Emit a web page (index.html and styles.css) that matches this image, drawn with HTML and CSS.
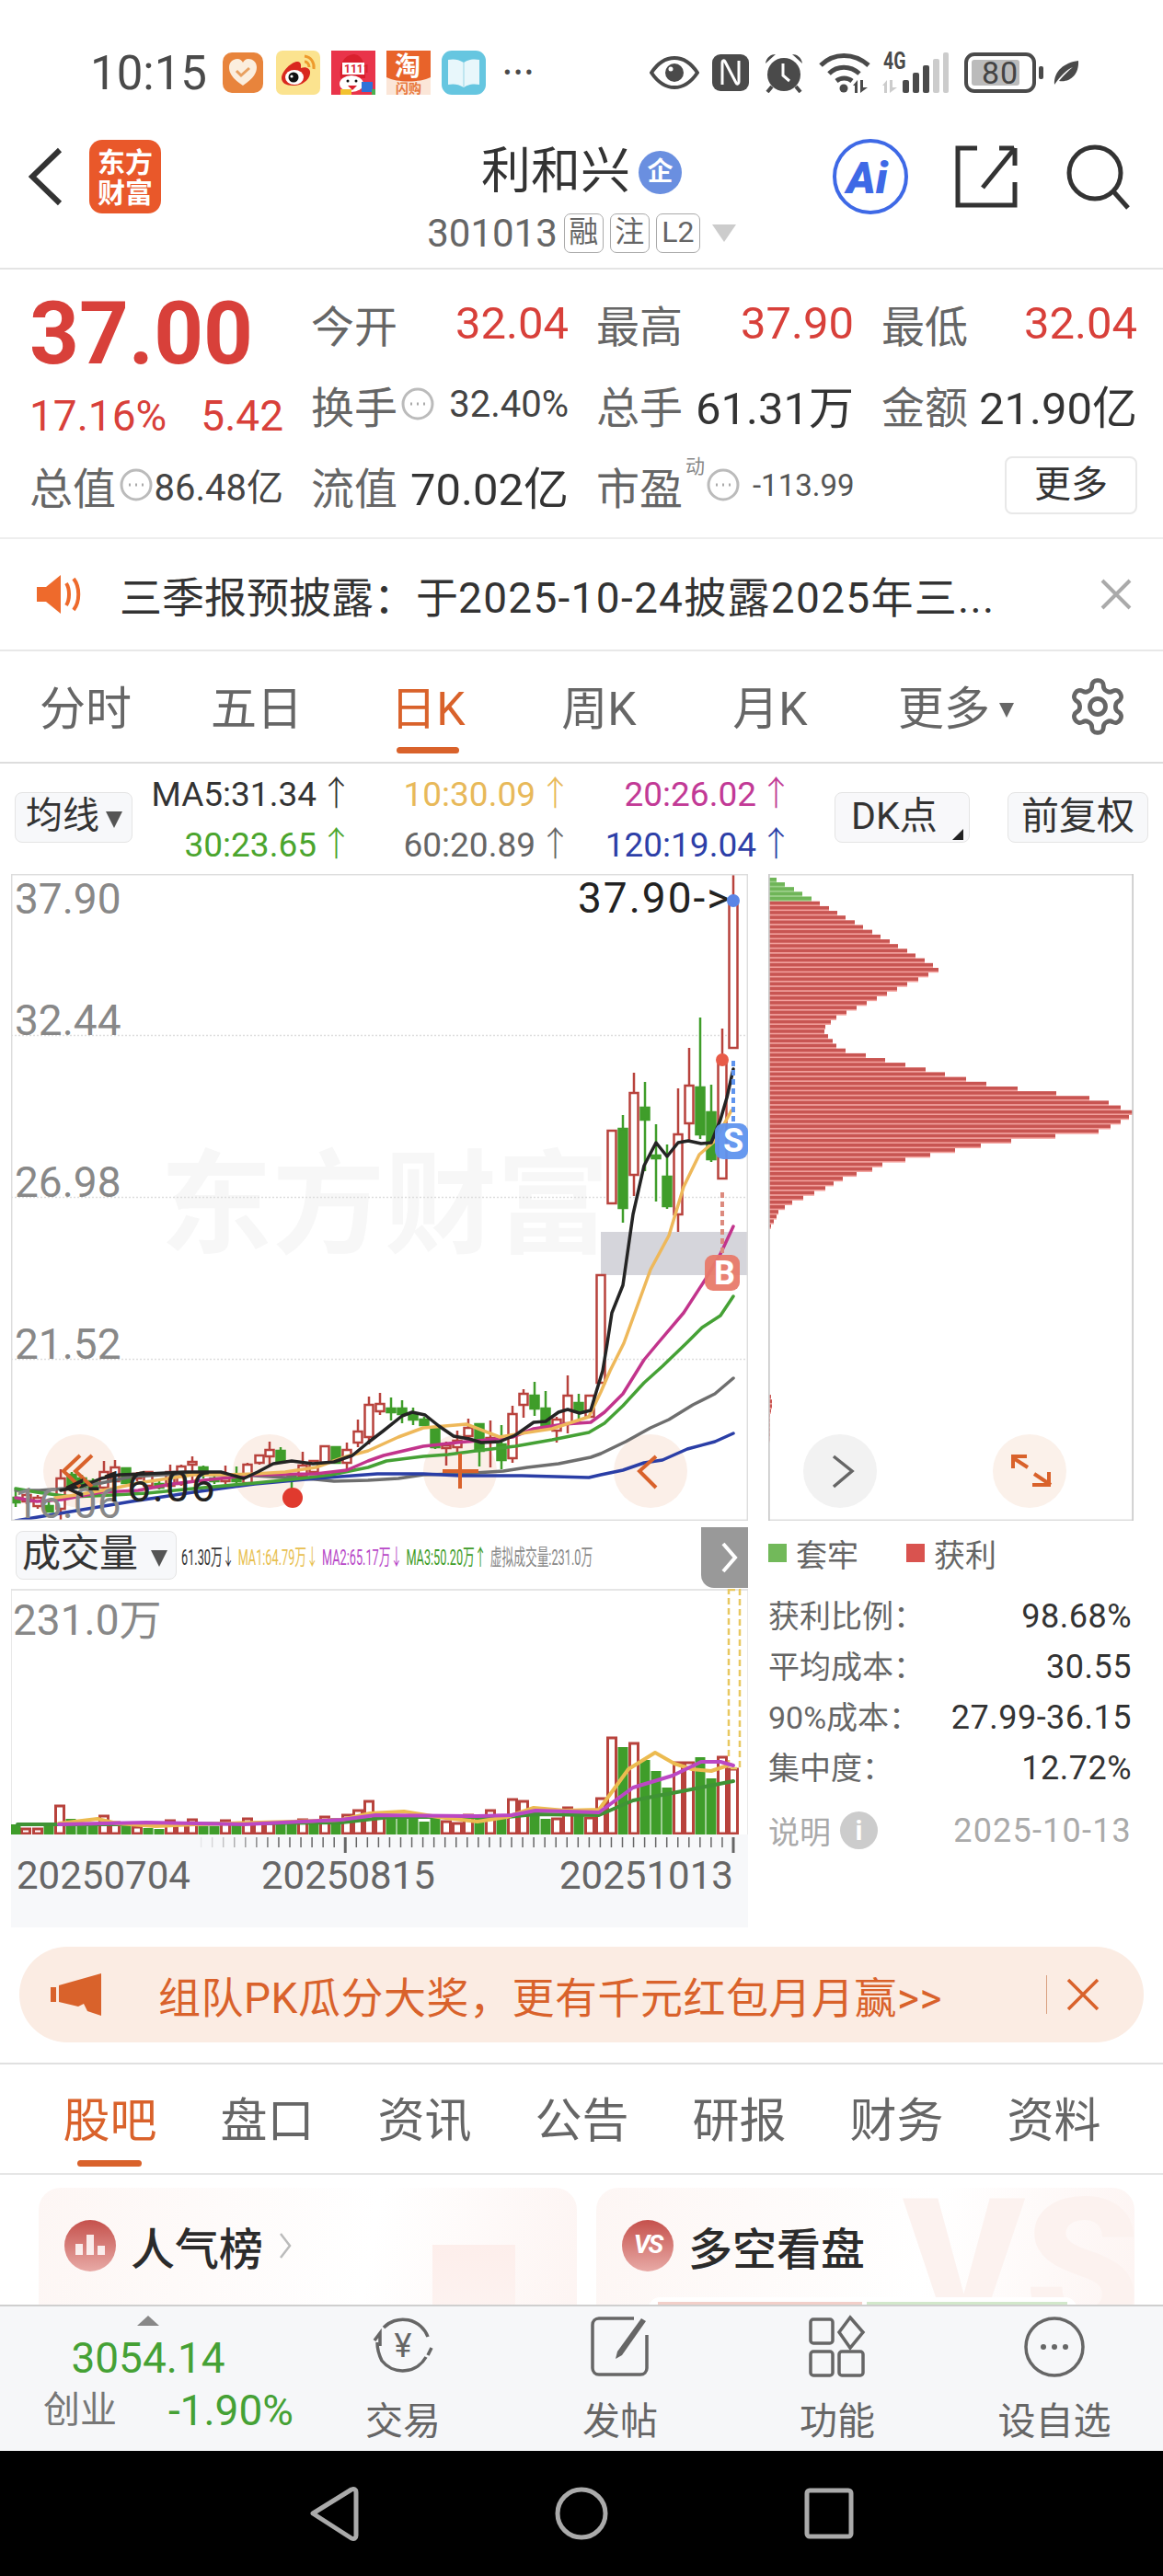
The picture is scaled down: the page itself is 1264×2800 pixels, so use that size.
FILE: index.html
```html
<!DOCTYPE html>
<html lang="zh-CN">
<head>
    <meta charset="UTF-8">
    <meta name="viewport" content="width=device-width, initial-scale=1.0">
    <title>利和兴 301013</title>
    <link rel="stylesheet" href="styles.css">
</head>
<body>

    <div class="status-bar">
        <span class="status-time">10:15</span>
        <svg class="app-icon app-icon-heart" viewBox="0 0 44 44">
            <rect width="44" height="44" rx="10" fill="#e8843c"/>
            <path d="M22 36 C10 28 7 22 7 16 C7 10 12 7 16 7 C19 7 21 9 22 11 C23 9 25 7 28 7 C32 7 37 10 37 16 C37 22 34 28 22 36z" fill="#fbeede"/>
            <path d="M15 20 L20 25 L29 17" fill="none" stroke="#e8a060" stroke-width="3"/>
        </svg>
        <svg class="app-icon app-icon-wide" viewBox="0 0 48 48">
            <rect width="48" height="48" rx="7" fill="#fbe38f"/>
            <path d="M6 30 C6 22 18 11 24 12 C28 13 27 17 27 19 C32 17 38 19 37 25 C36 33 26 39 18 38 C11 38 6 35 6 30z" fill="#d9281e"/>
            <ellipse cx="20" cy="29" rx="10" ry="8" fill="#fff"/>
            <circle cx="19" cy="29" r="5.5" fill="#111"/>
            <circle cx="17" cy="28" r="1.6" fill="#fff"/>
            <path d="M31 6 C38 7 42 13 41 20 M31 12 C34 12 36 15 36 18" fill="none" stroke="#ee9a2c" stroke-width="3"/>
        </svg>
        <svg class="app-icon app-icon-wide" viewBox="0 0 48 48">
            <rect width="48" height="48" fill="#e9344a"/>
            <path d="M10 30 C8 14 14 5 24 4 C32 4 38 12 37 30z" fill="#d9202e"/>
            <rect x="12" y="13" width="24" height="13" fill="#fff"/>
            <text class="app-text" x="14" y="24" font-size="12" fill="#d9202e">1111</text>
            <ellipse cx="22" cy="36" rx="13" ry="9" fill="#fff"/>
            <circle cx="18" cy="33" r="1.5" fill="#111"/>
            <circle cx="27" cy="33" r="1.5" fill="#111"/>
            <path d="M18 38 H28 L23 43z" fill="#d9202e"/>
            <rect x="33" y="34" width="12" height="11" fill="#2e72d8"/>
            <rect x="10" y="42" width="12" height="6" fill="#f2c230"/>
            <rect x="44" y="42" width="4" height="6" fill="#4caf50"/>
        </svg>
        <svg class="app-icon app-icon-wide" viewBox="0 0 48 48">
            <rect width="48" height="48" fill="#fbe6d8"/>
            <path d="M0 0 H48 V29 C36 35 12 35 0 29z" fill="#e8632a"/>
            <text class="app-text" x="9" y="27" font-size="28" fill="#fff">淘</text>
            <text class="app-text" x="10" y="46" font-size="14" fill="#e8783c">闪购</text>
        </svg>
        <svg class="app-icon app-icon-wide" viewBox="0 0 48 48">
            <rect width="48" height="48" rx="11" fill="#66c6e0"/>
            <path d="M24 13 C18 9 12 9 7 10 V37 C12 36 18 36 24 40 C30 36 36 36 41 37 V10 C36 9 30 9 24 13z" fill="#e8f7fb"/>
            <path d="M24 13 V40" stroke="#bfe6f0" stroke-width="2"/>
        </svg>
        <span class="status-more">•••</span>
        <div class="status-right">
            <svg class="icon-eye" viewBox="0 0 54 36">
                <path d="M2 18 C10 6 18 2 27 2 C36 2 44 6 52 18 C44 30 36 34 27 34 C18 34 10 30 2 18z" fill="none" stroke="#4a4a4a" stroke-width="4"/>
                <circle cx="27" cy="18" r="10" fill="#4a4a4a"/>
                <circle cx="23" cy="14" r="2.5" fill="#fff"/>
            </svg>
            <svg class="icon-nfc" viewBox="0 0 40 40">
                <rect width="40" height="40" rx="9" fill="#4a4a4a"/>
                <path d="M11 33 V9 C11 7 13 6 14 8 L26 31 C27 33 29 32 29 30 V7" fill="none" stroke="#fff" stroke-width="3"/>
            </svg>
            <svg class="icon-alarm" viewBox="0 0 44 44">
                <circle cx="22" cy="24" r="18" fill="#4a4a4a"/>
                <path d="M2 12 C3 5 8 2 13 2z M42 12 C41 5 36 2 31 2z" fill="#4a4a4a"/>
                <path d="M9 37 L4 43 M35 37 L40 43" stroke="#4a4a4a" stroke-width="4"/>
                <path d="M21 12 V25 L28 31" fill="none" stroke="#fff" stroke-width="3"/>
            </svg>
            <svg class="icon-wifi" viewBox="0 0 56 44">
                <path d="M2 14 C16 0 38 0 54 14 M11 23 C20 14 34 14 44 23 M19 31 C24 27 31 27 36 31" fill="none" stroke="#4a4a4a" stroke-width="5"/>
                <circle cx="27" cy="39" r="4.5" fill="#4a4a4a"/>
                <path d="M37 36 L42 30 V44 H39 V36z M45 30 H48 V38 L53 38 L45 44z" fill="#4a4a4a"/>
            </svg>
            <div class="signal">
                <span class="signal-text">4G</span>
                <svg class="icon-signal" viewBox="0 0 72 44">
                    <path d="M0 36 L5 30 V44 H2 V36z M8 30 H11 V38 L16 38 L8 44z" fill="#ccc"/>
                    <rect x="22" y="30" width="7" height="14" rx="2" fill="#4a4a4a"/>
                    <rect x="33" y="22" width="7" height="22" rx="2" fill="#4a4a4a"/>
                    <rect x="44" y="14" width="7" height="30" rx="2" fill="#4a4a4a"/>
                    <rect x="55" y="7" width="7" height="37" rx="2" fill="#ccc"/>
                    <rect x="66" y="0" width="6" height="44" rx="2" fill="#ccc"/>
                </svg>
            </div>
            <div class="battery">
                <div class="battery-level"></div>
                <span class="battery-text">80</span>
            </div>
            <span class="battery-nub"></span>
            <svg class="icon-leaf" viewBox="0 0 28 28">
                <path d="M1 27 C0 12 12 3 27 1 C28 16 18 25 6 23 C12 16 16 12 21 8 C14 11 8 17 1 27z" fill="#4a4a4a"/>
            </svg>
        </div>
    </div>

    <div class="app-header">
        <div class="header-left">
            <svg class="icon-back" viewBox="0 0 38 64">
                <path d="M34 3 L4 32 L34 61" fill="none" stroke="#333" stroke-width="6"/>
            </svg>
            <div class="brand-logo">东方<br>财富</div>
        </div>
        <div class="header-center">
            <div class="stock-name">
                <span>利和兴</span>
                <span class="name-badge">企</span>
            </div>
            <div class="stock-code">
                <span>301013</span>
                <span class="code-tag code-tag-first">融</span>
                <span class="code-tag">注</span>
                <span class="code-tag code-tag-wide">L2</span>
                <span class="code-arrow"></span>
            </div>
        </div>
        <div class="header-right">
            <svg class="icon-ai" viewBox="0 0 84 84">
                <circle cx="42" cy="42" r="39" fill="#fff" stroke="#3e69e6" stroke-width="4"/>
                <text class="ai-text" x="16" y="60" font-size="48">Ai</text>
            </svg>
            <svg class="icon-share" viewBox="0 0 68 68">
                <path d="M24 3 H3 V65 H65 V40 M64 3 H48 M65 3 V22 M65 3 L30 46" fill="none" stroke="#333" stroke-width="5"/>
            </svg>
            <svg class="icon-search" viewBox="0 0 72 72">
                <circle cx="32" cy="32" r="28" fill="none" stroke="#333" stroke-width="5"/>
                <path d="M52 52 L68 70" stroke="#333" stroke-width="5"/>
            </svg>
        </div>
    </div>

    <div class="quote">
        <div class="quote-cell quote-price red">37.00</div>
        <div class="quote-cell"><span class="label">今开</span><span class="red">32.04</span></div>
        <div class="quote-cell"><span class="label">最高</span><span class="red">37.90</span></div>
        <div class="quote-cell"><span class="label">最低</span><span class="red">32.04</span></div>

        <div class="quote-cell quote-change red"><span>17.16%</span><span>5.42</span></div>
        <div class="quote-cell">
            <span class="label">换手</span>
            <svg class="icon-dots" viewBox="0 0 36 36"><circle cx="18" cy="18" r="16" fill="none" stroke="#bbb" stroke-width="3"/><path d="M10 18 H12 M17 18 H19 M24 18 H26" stroke="#aaa" stroke-width="3"/></svg>
            <span class="small-value">32.40%</span>
        </div>
        <div class="quote-cell"><span class="label">总手</span><span class="dark">61.31万</span></div>
        <div class="quote-cell"><span class="label">金额</span><span class="dark">21.90亿</span></div>

        <div class="quote-cell">
            <span class="label">总值</span>
            <svg class="icon-dots" viewBox="0 0 36 36"><circle cx="18" cy="18" r="16" fill="none" stroke="#bbb" stroke-width="3"/><path d="M10 18 H12 M17 18 H19 M24 18 H26" stroke="#aaa" stroke-width="3"/></svg>
            <span class="small-value">86.48亿</span>
        </div>
        <div class="quote-cell"><span class="label">流值</span><span class="dark">70.02亿</span></div>
        <div class="quote-cell quote-pe">
            <span class="label">市盈</span>
            <sup class="pe-mark">动</sup>
            <svg class="icon-dots" viewBox="0 0 36 36"><circle cx="18" cy="18" r="16" fill="none" stroke="#bbb" stroke-width="3"/><path d="M10 18 H12 M17 18 H19 M24 18 H26" stroke="#aaa" stroke-width="3"/></svg>
            <span class="pe-value">-113.99</span>
        </div>
        <div class="quote-cell quote-more"><button class="more-button">更多</button></div>
    </div>

    <div class="notice">
        <svg class="icon-speaker" viewBox="0 0 52 44">
            <path d="M0 14 H10 L26 1 V43 L10 30 H0z" fill="#ee6a2c"/>
            <path d="M32 10 C36 16 36 28 32 34 M40 5 C47 14 47 30 40 39" fill="none" stroke="#ee6a2c" stroke-width="4"/>
        </svg>
        <span class="notice-text">三季报预披露：于<span class="notice-tail">2025-10-24披露2025年三...</span></span>
        <svg class="icon-close" viewBox="0 0 36 36">
            <path d="M3 3 L33 33 M33 3 L3 33" stroke="#aaa" stroke-width="4"/>
        </svg>
    </div>

    <div class="period-tabs">
        <span class="period-tab">分时</span>
        <span class="period-tab">五日</span>
        <span class="period-tab active">日K</span>
        <span class="period-tab">周K</span>
        <span class="period-tab">月K</span>
        <span class="period-tab period-tab-more">更多<i class="tab-arrow"></i></span>
        <svg class="icon-gear" viewBox="0 0 24 24">
            <path d="M12.22 2h-.44a2 2 0 0 0-2 2v.18a2 2 0 0 1-1 1.73l-.43.25a2 2 0 0 1-2 0l-.15-.08a2 2 0 0 0-2.73.73l-.22.38a2 2 0 0 0 .73 2.73l.15.1a2 2 0 0 1 1 1.72v.51a2 2 0 0 1-1 1.74l-.15.09a2 2 0 0 0-.73 2.73l.22.38a2 2 0 0 0 2.73.73l.15-.08a2 2 0 0 1 2 0l.43.25a2 2 0 0 1 1 1.73V20a2 2 0 0 0 2 2h.44a2 2 0 0 0 2-2v-.18a2 2 0 0 1 1-1.73l.43-.25a2 2 0 0 1 2 0l.15.08a2 2 0 0 0 2.73-.73l.22-.39a2 2 0 0 0-.73-2.73l-.15-.08a2 2 0 0 1-1-1.74v-.5a2 2 0 0 1 1-1.74l.15-.09a2 2 0 0 0 .73-2.73l-.22-.38a2 2 0 0 0-2.73-.73l-.15.08a2 2 0 0 1-2 0l-.43-.25a2 2 0 0 1-1-1.73V4a2 2 0 0 0-2-2z" fill="none" stroke="#666" stroke-width="1.7"/>
            <circle cx="12" cy="12" r="3" fill="none" stroke="#666" stroke-width="1.7"/>
        </svg>
    </div>

    <div class="ma-row">
        <div class="chart-button ma-button">均线<i class="button-arrow"></i></div>
        <div class="ma-values">
            <span class="ma-dark">MA5:31.34<i>↑</i></span>
            <span class="ma-yellow">10:30.09<i>↑</i></span>
            <span class="ma-magenta">20:26.02<i>↑</i></span>
            <span class="ma-green">30:23.65<i>↑</i></span>
            <span class="ma-gray">60:20.89<i>↑</i></span>
            <span class="ma-blue">120:19.04<i>↑</i></span>
        </div>
        <div class="chart-button dk-button">DK点<i class="corner-arrow"></i></div>
        <div class="chart-button fq-button">前复权</div>
    </div>

    <div class="chart-area">
        <div class="chart-left">
            <svg id="priceChart" class="chart-svg price-svg" viewBox="12 950 801 703">
                <text class="watermark" x="174" y="1352">东方财富</text>
                <path class="grid-line" d="M12 1125.5 H813 M12 1301.5 H813 M12 1477.5 H813"/>
                <rect x="653" y="1339" width="160" height="47" fill="#d5d5db"/>
                <circle class="float-circle" cx="87" cy="1599" r="40"/>
                <circle class="float-circle" cx="293" cy="1599" r="40"/>
                <circle class="float-circle" cx="500" cy="1599" r="40"/>
                <circle class="float-circle" cx="707" cy="1599" r="40"/>
                <g id="candles"></g>
                <g id="maLines"></g>
                <rect x="12.7" y="950.7" width="799.6" height="701.6" fill="none" stroke="#ddd" stroke-width="1.5"/>
                <path d="M87 1582 L69 1599 L87 1616 M100 1582 L82 1599 L100 1616 M481 1599 H520 M500 1580 V1618 M713 1583 L695 1599 L713 1617" class="float-mark"/>
                <circle cx="318" cy="1628" r="11" fill="#e03a2e"/>
                <text class="axis-label" x="16" y="993">37.90</text>
                <text class="axis-label" x="16" y="1125">32.44</text>
                <text class="axis-label" x="16" y="1301">26.98</text>
                <text class="axis-label" x="16" y="1477">21.52</text>
                <text class="axis-label" x="16" y="1650">16.06</text>
                <text class="price-mark" x="628" y="992">37.90-&gt;</text>
                <text class="price-mark" x="70" y="1632">&lt;-16.06</text>
                <path d="M797 1153 V1221" stroke="#5f94ee" stroke-width="4" stroke-dasharray="6 4" fill="none"/>
                <path d="M785 1296 V1364" stroke="#dc8a7e" stroke-width="4" stroke-dasharray="6 4" fill="none"/>
                <circle cx="797" cy="979" r="7" fill="#5a85e6"/>
                <circle cx="785" cy="1152" r="7" fill="#e85a48"/>
                <rect x="777" y="1221" width="36" height="39" rx="9" fill="#5f94ee" fill-opacity=".95"/>
                <text class="badge-letter" x="786" y="1252">S</text>
                <rect x="766" y="1364" width="38" height="39" rx="9" fill="#e87a6a" fill-opacity=".95"/>
                <text class="badge-letter" x="776" y="1396">B</text>
            </svg>
            <div class="volume-header">
                <div class="chart-button volume-button">成交量<i class="button-arrow"></i></div>
                <div class="volume-legend">
                    <span class="vol-dark">61.30万↓</span>
                    <span class="vol-yellow">MA1:64.79万↓</span>
                    <span class="vol-magenta">MA2:65.17万↓</span>
                    <span class="vol-green">MA3:50.20万↑</span>
                    <span class="vol-gray">虚拟成交量:231.0万</span>
                </div>
                <div class="volume-toggle">
                    <svg viewBox="0 0 20 36"><path d="M3 3 L16 18 L3 33" fill="none" stroke="#fff" stroke-width="4"/></svg>
                </div>
            </div>
            <svg id="volumeChart" class="chart-svg volume-svg" viewBox="12 1727 801 267">
                <path d="M12 1728 H813" stroke="#e5e5e5" stroke-width="2"/>
                <path d="M12 1727 V1994 M813 1727 V1994" stroke="#e2e2e2" stroke-width="1.5"/>
                <text class="axis-label" x="14" y="1777">231.0万</text>
                <g id="volumeBars"></g>
                <rect x="792" y="1728" width="12" height="194" fill="none" stroke="#e8c860" stroke-width="2.5" stroke-dasharray="7 4"/>
                <g id="volumeLines"></g>
            </svg>
            <svg id="axisChart" class="chart-svg axis-svg" viewBox="12 1994 801 101">
                <g id="axisTicks"></g>
                <text class="axis-date" x="18" y="2053">20250704</text>
                <text class="axis-date" x="284" y="2053">20250815</text>
                <text class="axis-date" x="608" y="2053">20251013</text>
            </svg>
        </div>
        <div class="chart-right">
            <svg id="chipChart" class="chart-svg chip-svg" viewBox="835 950 397 703">
                <g id="chipBars"></g>
                <path d="M835.5 950.7 H1231 M835.5 1652.3 H1231" fill="none" stroke="#ddd" stroke-width="1.5"/>
                <path d="M835.5 950 V1653 M1231.5 950 V1653" stroke="#ccc" stroke-width="2.5"/>
                <circle cx="913" cy="1599" r="40" fill="#f2f2f2"/>
                <circle cx="1119" cy="1599" r="40" fill="#fbf1ea"/>
                <path d="M906 1583 L926 1599 L906 1616" fill="none" stroke="#666" stroke-width="3.5"/>
                <path d="M1100 1584 L1117 1595 M1101 1596 V1583 H1116 M1142 1614 L1124 1602 M1140 1600 V1614 H1122" fill="none" stroke="#d9622b" stroke-width="4"/>
            </svg>
            <div class="chip-legend">
                <i class="legend-square legend-green"></i><span>套牢</span>
                <i class="legend-square legend-red"></i><span>获利</span>
            </div>
            <div class="chip-rows">
                <div class="chip-row"><span>获利比例：</span><b>98.68%</b></div>
                <div class="chip-row"><span>平均成本：</span><b>30.55</b></div>
                <div class="chip-row"><span>90%成本：</span><b>27.99-36.15</b></div>
                <div class="chip-row"><span>集中度：</span><b>12.72%</b></div>
            </div>
            <div class="chip-note">
                <span>说明</span><i class="info-mark">i</i>
                <span class="chip-date">2025-10-13</span>
            </div>
        </div>
    </div>

    <div class="promo">
        <svg class="icon-horn" viewBox="0 0 56 46">
            <rect x="0" y="15" width="6" height="16" fill="#d9622b"/>
            <path d="M9 13 L55 0 V46 L40 41 L36 33 L30 36 L9 31z" fill="#d9622b"/>
        </svg>
        <span class="promo-text">组队PK瓜分大奖，更有千元红包月月赢&gt;&gt;</span>
        <i class="promo-divider"></i>
        <svg class="icon-promo-close" viewBox="0 0 36 36">
            <path d="M2 2 L34 34 M34 2 L2 34" stroke="#d9622b" stroke-width="3.5"/>
        </svg>
    </div>

    <div class="content-tabs">
        <span class="content-tab active">股吧</span>
        <span class="content-tab">盘口</span>
        <span class="content-tab">资讯</span>
        <span class="content-tab">公告</span>
        <span class="content-tab">研报</span>
        <span class="content-tab">财务</span>
        <span class="content-tab">资料</span>
    </div>

    <div class="cards">
        <div class="card">
            <div class="card-shape"></div>
            <div class="card-title">
                <span class="card-icon">
                    <svg viewBox="0 0 56 56"><path d="M12 38 H20 V26 H12z M24 38 H32 V16 H24z M36 38 H44 V28 H36z" fill="#fff" fill-opacity=".85"/></svg>
                </span>
                <span>人气榜</span>
                <svg class="card-chevron" viewBox="0 0 16 32"><path d="M3 3 L13 16 L3 29" fill="none" stroke="#bbb" stroke-width="2.5"/></svg>
            </div>
        </div>
        <div class="card">
            <span class="card-big">VS</span>
            <div class="card-title">
                <span class="card-icon card-icon-vs">VS</span>
                <span>多空看盘</span>
            </div>
            <div class="vote-bar"><i class="vote-red"></i><i class="vote-green"></i></div>
        </div>
    </div>

    <div class="bottom-bar">
        <div class="index-box">
            <i class="index-arrow"></i>
            <span class="index-value">3054.14</span>
            <div class="index-row"><span class="index-name">创业</span><span class="index-change">-1.90%</span></div>
        </div>
        <div class="bottom-item">
            <svg viewBox="0 0 70 70">
                <path d="M14 14 A29 29 0 0 1 62 24 M60 46 A29 29 0 0 1 12 50 C9 44 7 38 7 30" fill="none" stroke="#666" stroke-width="3.5"/>
                <path d="M4 28 L10 20 V34 M62 44 L66 36" fill="none" stroke="#666" stroke-width="3.5"/>
                <text class="yen" x="35" y="46" text-anchor="middle">¥</text>
            </svg>
            <span>交易</span>
        </div>
        <div class="bottom-item">
            <svg viewBox="0 0 70 70">
                <path d="M50 4 H12 C8 4 5 7 5 11 V58 C5 62 8 65 12 65 H57 C61 65 64 62 64 58 V22" fill="none" stroke="#666" stroke-width="3.5"/>
                <path d="M58 4 L63 7 L37 44 L30 48 L32 40z" fill="#666"/>
            </svg>
            <span>发帖</span>
        </div>
        <div class="bottom-item">
            <svg viewBox="0 0 70 70">
                <rect x="6" y="5" width="24" height="26" rx="3" fill="none" stroke="#666" stroke-width="3.5"/>
                <path d="M49 3 L63 19 L49 36 L37 19z" fill="none" stroke="#666" stroke-width="3.5"/>
                <rect x="6" y="40" width="24" height="26" rx="3" fill="none" stroke="#666" stroke-width="3.5"/>
                <rect x="37" y="40" width="26" height="26" rx="3" fill="none" stroke="#666" stroke-width="3.5"/>
            </svg>
            <span>功能</span>
        </div>
        <div class="bottom-item">
            <svg viewBox="0 0 70 70">
                <circle cx="35" cy="35" r="31" fill="none" stroke="#666" stroke-width="3.5"/>
                <circle cx="23" cy="35" r="3" fill="#666"/>
                <circle cx="35" cy="35" r="3" fill="#666"/>
                <circle cx="47" cy="35" r="3" fill="#666"/>
            </svg>
            <span>设自选</span>
        </div>
    </div>

    <div class="nav-bar">
        <svg viewBox="0 0 60 60"><path d="M50 4 L8 30 L50 57 C53 58 55 57 55 54 V7 C55 4 53 3 50 4z" fill="none" stroke="#aaa" stroke-width="5" stroke-linejoin="round"/></svg>
        <svg viewBox="0 0 60 60"><ellipse cx="30" cy="30" rx="26" ry="26" fill="none" stroke="#aaa" stroke-width="5"/></svg>
        <svg viewBox="0 0 60 60"><rect x="5" y="5" width="48" height="50" rx="3" fill="none" stroke="#aaa" stroke-width="5"/></svg>
    </div>

    <script src="chart.js"></script>
</body>
</html>
```

FILE: styles.css
```css
* {
    box-sizing: border-box;
}

body {
    margin: 0;
    width: 1264px;
    height: 2800px;
    overflow: hidden;
    background-color: #fff;
    color: #333;
    font-family: Roboto, "Noto Sans CJK SC", sans-serif;
}

i {
    font-style: normal;
}

.red {
    color: #d8403a;
}

.dark {
    color: #333;
}

/* status bar */
.status-bar {
    display: flex;
    align-items: center;
    height: 130px;
    padding: 28px 0 0 98px;
}

.status-time {
    width: 144px;
    font-size: 51px;
    color: #4a4a4a;
}

.app-icon {
    width: 44px;
    height: 44px;
    margin-right: 14px;
}

.app-icon-wide {
    width: 48px;
    height: 48px;
    margin-right: 12px;
}

.app-text {
    font-weight: 700;
}

.status-more {
    margin-left: 7px;
    width: 40px;
    font-size: 26px;
    color: #4a4a4a;
    letter-spacing: 3px;
    white-space: nowrap;
}

.status-right {
    display: flex;
    align-items: center;
    margin-left: 119px;
}

.icon-eye {
    width: 54px;
    height: 36px;
}

.icon-nfc {
    width: 40px;
    height: 40px;
    margin-left: 14px;
}

.icon-alarm {
    width: 44px;
    height: 44px;
    margin-left: 16px;
}

.icon-wifi {
    width: 56px;
    height: 44px;
    margin-left: 16px;
}

.signal {
    display: flex;
    flex-direction: column;
    position: relative;
    width: 72px;
    height: 44px;
    margin-left: 13px;
}

.signal-text {
    position: absolute;
    left: 1px;
    top: -4px;
    font-size: 25px;
    font-weight: 700;
    line-height: 28px;
    color: #4a4a4a;
    transform: scaleX(.78);
    transform-origin: left;
}

.icon-signal {
    width: 72px;
    height: 44px;
}

.battery {
    position: relative;
    width: 78px;
    height: 44px;
    margin-left: 17px;
    border: 4px solid #4a4a4a;
    border-radius: 11px;
    text-align: center;
}

.battery-level {
    position: absolute;
    left: 4px;
    top: 4px;
    bottom: 4px;
    width: 52px;
    background-color: #bbb;
    border-radius: 3px;
}

.battery-text {
    position: relative;
    font-size: 34px;
    line-height: 36px;
    color: #444;
    letter-spacing: 1px;
}

.battery-nub {
    width: 5px;
    height: 14px;
    margin-left: 3px;
    background-color: #4a4a4a;
    border-radius: 2px;
}

.icon-leaf {
    width: 28px;
    height: 28px;
    margin-left: 11px;
}

/* header */
.app-header {
    display: flex;
    height: 163px;
    border-bottom: 2px solid #e4e4e4;
}

.header-left {
    display: flex;
    align-items: center;
    width: 360px;
    height: 124px;
    padding-left: 31px;
}

.icon-back {
    width: 38px;
    height: 64px;
}

.brand-logo {
    width: 78px;
    height: 80px;
    margin-left: 28px;
    padding-top: 8px;
    background-color: #e9582a;
    border-radius: 14px;
    color: #fff;
    font-size: 30px;
    font-weight: 700;
    line-height: 33px;
    text-align: center;
}

.header-center {
    display: flex;
    flex-direction: column;
    align-items: center;
    width: 544px;
    padding-top: 30px;
}

.stock-name {
    display: flex;
    align-items: center;
    height: 54px;
    font-size: 54px;
    line-height: 54px;
    color: #333;
}

.name-badge {
    width: 47px;
    height: 47px;
    margin-left: 9px;
    background-color: #6a8fe0;
    border-radius: 50%;
    color: #fff;
    font-size: 28px;
    font-weight: 700;
    line-height: 46px;
    text-align: center;
}

.stock-code {
    display: flex;
    align-items: center;
    height: 43px;
    margin-top: 18px;
    font-size: 42px;
    color: #666;
}

.code-tag {
    width: 43px;
    height: 43px;
    margin-left: 7px;
    border: 1.5px solid #aaa;
    border-radius: 7px;
    font-size: 32px;
    line-height: 39px;
    text-align: center;
}

.code-tag-wide {
    width: 48px;
}

.code-arrow {
    width: 0;
    height: 0;
    margin-left: 13px;
    border-top: 19px solid #ccc;
    border-left: 13px solid transparent;
    border-right: 13px solid transparent;
}

.header-right {
    display: flex;
    align-items: center;
    height: 124px;
    padding-bottom: 0;
}

.icon-ai {
    width: 84px;
    height: 84px;
}

.ai-text {
    fill: #3e69e6;
    font-weight: 900;
    font-style: italic;
}

.icon-share {
    width: 68px;
    height: 68px;
    margin-left: 50px;
}

.icon-search {
    width: 72px;
    height: 72px;
    margin-left: 52px;
}

/* quote block */
.quote {
    display: grid;
    grid-template-columns: 276px 280px 280px 278px;
    grid-auto-rows: 88px;
    column-gap: 30px;
    height: 293px;
    padding: 14px 0 0 32px;
    border-bottom: 2px solid #eee;
    font-size: 49px;
}

.quote-cell {
    display: flex;
    align-items: center;
    justify-content: space-between;
    white-space: nowrap;
}

.label {
    color: #666;
    font-size: 47px;
}

.quote-price {
    padding-top: 24px;
    font-size: 94px;
    font-weight: 700;
}

.quote-change {
    padding-top: 26px;
    font-size: 46px;
}

.icon-dots {
    flex: none;
    width: 36px;
    height: 36px;
    margin-left: 4px;
}

.small-value {
    margin-left: auto;
    font-size: 40px;
    color: #444;
}

.quote-pe {
    justify-content: flex-start;
}

.pe-mark {
    align-self: flex-start;
    margin: 12px -2px 0 3px;
    font-size: 21px;
    line-height: 24px;
    color: #888;
}

.pe-value {
    margin-left: 14px;
    font-size: 33px;
    color: #555;
}

.quote-more {
    justify-content: flex-end;
}

.more-button {
    width: 144px;
    height: 63px;
    background-color: #fff;
    border: 2px solid #e8e8e8;
    border-radius: 8px;
    color: #333;
    font-family: inherit;
    font-size: 40px;
    line-height: 56px;
    padding: 0;
}

/* notice */
.notice {
    display: flex;
    align-items: center;
    height: 122px;
    padding-left: 40px;
    border-bottom: 2px solid #e8e8e8;
}

.icon-speaker {
    width: 52px;
    height: 44px;
}

.notice-text {
    width: 1065px;
    margin-left: 38px;
    font-size: 46px;
    color: #333;
    white-space: nowrap;
}

.notice-tail {
    letter-spacing: 1.3px;
}

.icon-close {
    width: 36px;
    height: 36px;
}

/* period tabs */
.period-tabs {
    display: flex;
    height: 122px;
    border-bottom: 2px solid #ddd;
}

.period-tab {
    position: relative;
    width: 186px;
    height: 120px;
    font-size: 50px;
    line-height: 126px;
    text-align: center;
    color: #666;
}

.period-tab-more {
    padding-left: 32px;
    white-space: nowrap;
}

.period-tab.active {
    color: #d9622b;
}

.period-tab.active::after {
    content: "";
    position: absolute;
    left: 59px;
    bottom: 9px;
    width: 68px;
    height: 7px;
    background-color: #d9622b;
    border-radius: 4px;
}

.tab-arrow {
    display: inline-block;
    width: 0;
    height: 0;
    margin-left: 10px;
    vertical-align: 8px;
    border-top: 16px solid #666;
    border-left: 8px solid transparent;
    border-right: 8px solid transparent;
}

.icon-gear {
    width: 68px;
    height: 68px;
    margin: 26px 0 0 43px;
}

/* ma row */
.chart-button {
    position: relative;
    height: 55px;
    background-color: #f7f8fa;
    border: 1.5px solid #e4e4e4;
    border-radius: 8px;
    font-size: 40px;
    line-height: 50px;
    color: #333;
    white-space: nowrap;
}

.button-arrow {
    position: absolute;
    right: 10px;
    top: 20px;
    width: 0;
    height: 0;
    border-top: 18px solid #555;
    border-left: 9px solid transparent;
    border-right: 9px solid transparent;
}

.ma-row {
    display: flex;
    align-items: center;
    height: 120px;
    padding: 3px 0 7px 16px;
}

.ma-button {
    width: 128px;
    padding-left: 11px;
}

.ma-values {
    display: grid;
    grid-template-columns: 233px 238px 240px;
    grid-auto-rows: 55px;
    font-size: 37px;
    line-height: 55px;
    text-align: right;
    white-space: nowrap;
}

.ma-values i {
    display: inline-block;
    width: 30px;
    margin-left: 3px;
    font-family: "Noto Sans CJK SC", sans-serif;
    font-weight: 300;
}

.ma-dark {
    color: #333;
}

.ma-yellow {
    color: #e8b95a;
}

.ma-magenta {
    color: #c23a96;
}

.ma-green {
    color: #4ba52e;
}

.ma-gray {
    color: #666;
}

.ma-blue {
    color: #2d3fa8;
}

.dk-button {
    width: 147px;
    margin-left: 52px;
    padding-left: 17px;
    font-size: 41px;
    background-color: #f8f8fa;
}

.corner-arrow {
    position: absolute;
    right: 6px;
    bottom: 2px;
    width: 0;
    height: 0;
    border-bottom: 12px solid #222;
    border-left: 12px solid transparent;
}

.fq-button {
    width: 153px;
    margin-left: 41px;
    text-align: center;
    font-size: 41px;
}

/* charts */
.chart-area {
    display: flex;
    height: 1145px;
}

.chart-left {
    width: 801px;
    margin-left: 12px;
}

.chart-right {
    width: 397px;
    margin-left: 22px;
}

.chart-svg {
    display: block;
}

.price-svg {
    width: 801px;
    height: 703px;
}

.chip-svg {
    width: 397px;
    height: 703px;
}

.volume-svg {
    width: 801px;
    height: 267px;
}

.axis-svg {
    width: 801px;
    height: 101px;
    background-color: #f7f8fa;
}

.watermark {
    font-size: 122px;
    font-weight: 700;
    fill: #f7f7f7;
}

.grid-line {
    fill: none;
    stroke: #ddd;
    stroke-width: 1.5;
    stroke-dasharray: 2 2;
}

.float-circle {
    fill: #fbefe8;
}

.float-mark {
    fill: none;
    stroke: #d9622b;
    stroke-width: 4;
}

.axis-label {
    font-size: 46px;
    fill: #888;
}

.price-mark {
    font-size: 46px;
    fill: #222;
    letter-spacing: 2px;
}

.badge-letter {
    font-size: 36px;
    font-weight: 700;
    fill: #fff;
}

.axis-date {
    font-size: 42px;
    fill: #666;
}

.volume-header {
    position: relative;
    display: flex;
    height: 74px;
    padding: 11px 0 0 5px;
}

.volume-button {
    flex: none;
    width: 175px;
    height: 53px;
    padding-left: 6px;
    font-size: 42px;
    line-height: 48px;
}

.volume-button .button-arrow {
    right: 9px;
}

.volume-legend {
    display: flex;
    align-items: center;
    gap: 8px;
    height: 53px;
    margin-left: 5px;
    font-size: 24px;
    white-space: nowrap;
    transform: scaleX(.53);
    transform-origin: left center;
}

.vol-dark {
    color: #333;
}

.vol-yellow {
    color: #e8c050;
}

.vol-magenta {
    color: #b848c8;
}

.vol-green {
    color: #3f9d2a;
}

.vol-gray {
    color: #888;
}

.volume-toggle {
    position: absolute;
    right: 0;
    top: 7px;
    display: flex;
    align-items: center;
    justify-content: center;
    width: 51px;
    height: 66px;
    padding-left: 10px;
    background-color: #999;
    border-radius: 0 0 0 14px;
}

.volume-toggle svg {
    width: 20px;
    height: 36px;
}

/* chip panel */
.chip-legend {
    display: flex;
    align-items: center;
    height: 20px;
    margin-top: 25px;
    font-size: 34px;
    color: #666;
}

.legend-square {
    width: 20px;
    height: 20px;
}

.legend-square + span {
    margin-left: 10px;
}

.legend-green {
    background-color: #72b95a;
}

.legend-red {
    margin-left: 52px;
    background-color: #d9534f;
}

.chip-rows {
    margin-top: 32px;
    padding-right: 2px;
}

.chip-row {
    display: flex;
    justify-content: space-between;
    height: 55px;
    font-size: 34px;
    line-height: 55px;
    color: #666;
}

.chip-row b {
    font-size: 36px;
    font-weight: 400;
    letter-spacing: .5px;
    color: #333;
}

.chip-note {
    display: flex;
    align-items: center;
    height: 41px;
    margin-top: 19px;
    padding-right: 2px;
    font-size: 34px;
    color: #aaa;
}

.info-mark {
    width: 41px;
    height: 41px;
    margin-left: 10px;
    background-color: #ccc;
    border-radius: 50%;
    color: #fff;
    font-size: 30px;
    font-weight: 700;
    line-height: 41px;
    text-align: center;
}

.chip-date {
    margin-left: auto;
    font-size: 36px;
    letter-spacing: 1.2px;
}

/* promo */
.promo {
    display: flex;
    align-items: center;
    width: 1222px;
    height: 104px;
    margin: 21px 0 0 21px;
    padding-left: 34px;
    background-color: #fbece3;
    border-radius: 52px;
}

.icon-horn {
    width: 56px;
    height: 46px;
}

.promo-text {
    width: 965px;
    margin-left: 61px;
    font-size: 46px;
    letter-spacing: .5px;
    color: #d9622b;
    white-space: nowrap;
}

.promo-divider {
    width: 1px;
    height: 42px;
    background-color: #d9a080;
}

.icon-promo-close {
    width: 36px;
    height: 36px;
    margin-left: 21px;
}

/* content tabs */
.content-tabs {
    display: flex;
    height: 122px;
    margin-top: 22px;
    padding-left: 34px;
    border-top: 2px solid #e0e0e0;
    border-bottom: 2px solid #e6e6e6;
}

.content-tab {
    position: relative;
    width: 171px;
    font-size: 51px;
    line-height: 124px;
    text-align: center;
    color: #666;
}

.content-tab.active {
    color: #d9622b;
}

.content-tab.active::after {
    content: "";
    position: absolute;
    left: 50px;
    bottom: 7px;
    width: 70px;
    height: 7px;
    background-color: #d9622b;
    border-radius: 4px;
}

/* cards */
.cards {
    display: flex;
    gap: 21px;
    height: 127px;
    margin-top: 14px;
    padding-left: 42px;
    overflow: hidden;
}

.card {
    position: relative;
    width: 585px;
    height: 200px;
    background: linear-gradient(100deg, #fdf6f4, #fff 60%, #fdf4f2);
    border-radius: 24px;
    overflow: hidden;
}

.card-shape {
    position: absolute;
    left: 428px;
    top: 62px;
    width: 90px;
    height: 120px;
    background: linear-gradient(#fdeeeb, #fdf6f4);
}

.card-big {
    position: absolute;
    right: -6px;
    top: -34px;
    font-size: 200px;
    font-weight: 900;
    line-height: 240px;
    color: #fcf2ef;
}

.card-title {
    position: relative;
    display: flex;
    align-items: center;
    height: 56px;
    margin-top: 35px;
    padding-left: 28px;
    font-size: 48px;
    font-weight: 500;
    color: #2b2b2b;
}

.card-icon {
    display: block;
    width: 56px;
    height: 56px;
    margin-right: 16px;
    background: linear-gradient(#c5514c, #e8aaa6);
    border-radius: 50%;
    color: #fff;
    font-size: 28px;
    font-weight: 700;
    font-style: italic;
    line-height: 54px;
    text-align: center;
}

.card-icon svg {
    display: block;
    width: 56px;
    height: 56px;
}

.card-icon-vs {
    letter-spacing: -2px;
}

.card-chevron {
    width: 16px;
    height: 32px;
    margin-left: 16px;
}

.vote-bar {
    position: relative;
    display: flex;
    gap: 5px;
    width: 465px;
    height: 40px;
    margin: 28px 0 0 57px;
    padding: 5px 10px 0;
    background-color: #fff;
    border-radius: 12px;
}

.vote-red {
    width: 225px;
    background-color: #f2cfc9;
}

.vote-green {
    width: 220px;
    background-color: #d2e8cb;
}

/* bottom bar */
.bottom-bar {
    display: flex;
    height: 159px;
    background-color: #f6f7f9;
    border-top: 2px solid #cfcfcf;
}

.index-box {
    display: flex;
    flex-direction: column;
    align-items: center;
    width: 320px;
    padding-left: 2px;
}

.index-arrow {
    width: 0;
    height: 0;
    margin-top: 10px;
    border-bottom: 11px solid #888;
    border-left: 12px solid transparent;
    border-right: 12px solid transparent;
}

.index-value {
    margin-top: 8px;
    font-size: 46px;
    line-height: 54px;
    color: #45a135;
}

.index-row {
    display: flex;
    align-items: center;
    justify-content: space-between;
    width: 272px;
    margin-left: 44px;
    line-height: 60px;
}

.index-name {
    font-size: 40px;
    color: #777;
}

.index-change {
    font-size: 46px;
    color: #45a135;
}

.bottom-item {
    display: flex;
    flex-direction: column;
    align-items: center;
    width: 236px;
    padding-top: 9px;
    font-size: 41px;
    color: #666;
}

.bottom-item svg {
    width: 70px;
    height: 70px;
}

.bottom-item span {
    margin-top: 17px;
    line-height: 58px;
}

.yen {
    font-size: 36px;
    fill: #666;
}

/* nav */
.nav-bar {
    display: flex;
    align-items: center;
    justify-content: center;
    gap: 210px;
    height: 136px;
    background-color: #000;
}

.nav-bar svg {
    width: 60px;
    height: 60px;
}
```

FILE: chart.js
```js
const SVG_NS = 'http://www.w3.org/2000/svg';

function add(parent, tag, attrs) {
    const node = document.createElementNS(SVG_NS, tag);
    for (const key in attrs) {
        node.setAttribute(key, attrs[key]);
    }
    parent.appendChild(node);
    return node;
}

function drawLine(parent, points, color, width) {
    add(parent, 'polyline', {
        points: points.join(' '),
        fill: 'none',
        stroke: color,
        'stroke-width': width,
        'stroke-linejoin': 'round',
        'stroke-linecap': 'round'
    });
}

// candles: color, x, body top, body bottom, wick top, wick bottom
const candles = [
    ['r', 797, 977, 1139, 950, 1139], ['r', 785, 1156, 1281, 1118, 1281],
    ['g', 773, 1209, 1260, 1179, 1263], ['g', 761, 1182, 1233, 1106, 1238],
    ['r', 749, 1180, 1221, 1139, 1240], ['r', 737, 1233, 1320, 1183, 1339],
    ['g', 725, 1279, 1311, 1244, 1314], ['g', 713, 1256, 1259, 1222, 1306],
    ['g', 701, 1204, 1217, 1176, 1273], ['r', 689, 1188, 1277, 1166, 1300],
    ['g', 677, 1227, 1313, 1212, 1329], ['r', 665, 1229, 1308, 1229, 1308],
    ['r', 653, 1386, 1503, 1386, 1503], ['r', 641, 1517, 1540, 1517, 1540],
    ['g', 629, 1525, 1533, 1515, 1543], ['r', 617, 1517, 1547, 1495, 1558],
    ['r', 605, 1543, 1555, 1540, 1568], ['g', 593, 1531, 1552, 1512, 1553],
    ['g', 581, 1517, 1531, 1502, 1539], ['r', 569, 1515, 1527, 1510, 1541],
    ['r', 557, 1537, 1585, 1528, 1590], ['g', 545, 1570, 1587, 1549, 1597],
    ['r', 533, 1563, 1566, 1544, 1595], ['g', 521, 1548, 1577, 1547, 1594],
    ['r', 509, 1552, 1561, 1542, 1565], ['r', 497, 1566, 1573, 1555, 1580],
    ['r', 485, 1571, 1574, 1567, 1593], ['g', 473, 1552, 1573, 1552, 1575],
    ['g', 461, 1543, 1549, 1540, 1550], ['g', 449, 1537, 1543, 1530, 1549],
    ['g', 437, 1531, 1537, 1522, 1547], ['g', 425, 1531, 1535, 1519, 1544],
    ['r', 413, 1526, 1534, 1514, 1538], ['r', 401, 1527, 1562, 1518, 1570],
    ['r', 389, 1556, 1568, 1543, 1573], ['r', 377, 1576, 1590, 1568, 1597],
    ['g', 365, 1573, 1590, 1573, 1590], ['r', 353, 1572, 1590, 1572, 1590],
    ['r', 341, 1588, 1600, 1587, 1603], ['r', 329, 1593, 1605, 1578, 1607],
    ['g', 317, 1603, 1606, 1603, 1620], ['g', 305, 1577, 1589, 1573, 1590],
    ['r', 293, 1576, 1583, 1567, 1593], ['r', 282, 1582, 1590, 1582, 1592],
    ['r', 269, 1592, 1612, 1590, 1615], ['g', 257, 1607, 1610, 1594, 1615],
    ['r', 245, 1607, 1610, 1593, 1613], ['g', 233, 1607, 1610, 1603, 1613],
    ['g', 221, 1595, 1602, 1593, 1607], ['r', 209, 1589, 1592, 1583, 1610],
    ['r', 197, 1594, 1613, 1592, 1615], ['r', 185, 1600, 1615, 1592, 1617],
    ['g', 173, 1613, 1617, 1610, 1619], ['r', 161, 1600, 1615, 1599, 1617],
    ['r', 149, 1602, 1607, 1600, 1610], ['g', 137, 1596, 1612, 1595, 1613],
    ['r', 125, 1595, 1610, 1587, 1617], ['r', 113, 1600, 1617, 1588, 1620],
    ['g', 101, 1610, 1620, 1607, 1623], ['g', 89, 1607, 1617, 1603, 1620],
    ['g', 78, 1603, 1617, 1600, 1620], ['r', 66, 1607, 1640, 1597, 1653],
    ['g', 53, 1637, 1643, 1630, 1644], ['r', 41, 1628, 1637, 1625, 1640],
    ['r', 29, 1625, 1632, 1622, 1635], ['g', 17, 1628, 1633, 1620, 1638]
];

const RED = '#b8423c';
const GREEN = '#3f9d2a';

const candleLayer = document.getElementById('candles');
candles.forEach(([color, x, top, bottom, wickTop, wickBottom]) => {
    const stroke = color === 'r' ? RED : GREEN;
    add(candleLayer, 'line', {
        x1: x, x2: x, y1: wickTop, y2: wickBottom,
        stroke: stroke, 'stroke-width': 2.5
    });
    add(candleLayer, 'rect', {
        x: x - 4.5, y: top, width: 9, height: bottom - top,
        fill: color === 'r' ? '#fff' : GREEN,
        stroke: stroke, 'stroke-width': 2.5
    });
});

const maLayer = document.getElementById('maLines');
drawLine(maLayer, ['17,1620', '43,1620', '70,1618', '110,1612', '143,1605', '177,1603', '210,1602', '243,1603', '277,1604', '310,1606', '343,1608', '363,1610', '400,1609', '433,1607', '460,1603', '500,1602', '547,1599', '573,1595', '607,1591', '642,1584', '653,1580', '680,1567', '707,1552', '727,1543', '753,1527', '777,1515', '797,1498'], '#6e6e6e', 3.5);
drawLine(maLayer, ['17,1653', '77,1643', '143,1632', '210,1622', '277,1613', '343,1607', '410,1602', '460,1602', '500,1604', '567,1604', '640,1606', '653,1603', '677,1598', '700,1590', '720,1587', '747,1575', '777,1567', '797,1558'], '#2a3ea6', 3.5);
drawLine(maLayer, ['17,1618', '40,1622', '77,1627', '123,1625', '160,1623', '210,1618', '277,1612', '327,1607', '360,1603', '400,1595', '420,1588', '460,1583', '487,1581', '517,1577', '560,1572', '600,1565', '640,1557', '657,1547', '677,1528', '700,1503', '720,1485', '747,1459', '763,1443', '783,1430', '797,1409'], '#45a135', 3.5);
drawLine(maLayer, ['17,1628', '40,1632', '67,1630', '110,1622', '150,1620', '187,1613', '230,1608', '277,1603', '343,1602', '377,1598', '400,1588', '417,1582', '460,1572', '497,1568', '530,1565', '557,1562', '580,1553', '613,1548', '642,1546', '657,1535', '677,1515', '700,1478', '715,1460', '743,1427', '767,1390', '783,1363', '797,1333'], '#c2348c', 3.5);
drawLine(maLayer, ['60,1628', '83,1625', '123,1618', '150,1612', '183,1607', '210,1603', '250,1603', '277,1602', '310,1600', '343,1595', '377,1583', '400,1577', '433,1562', '460,1552', '507,1548', '543,1562', '567,1558', '600,1553', '640,1540', '653,1513', '663,1490', '678,1460', '707,1380', '727,1343', '743,1290', '760,1255', '777,1240', '795,1207'], '#eeb85a', 3.5);
drawLine(maLayer, ['66,1620', '90,1615', '110,1607', '130,1603', '160,1602', '200,1600', '240,1600', '265,1607', '280,1600', '297,1591', '317,1588', '340,1591', '363,1589', '383,1582', '400,1568', '417,1555', '437,1539', '448,1535', '462,1538', '477,1550', '493,1561', '510,1564', '523,1568', '543,1567', '560,1560', '580,1546', '593,1545', '607,1535', '617,1532', '630,1536', '642,1533', '648,1513', '655,1490', '660,1460', '665,1427', '677,1397', '688,1320', '700,1267', '713,1242', '725,1257', '737,1242', '748,1240', '762,1243', '773,1242', '783,1217', '790,1193', '797,1162'], '#242424', 3.5);

// volume: color, x, bar top
const volumes = [
    ['r', 797, 1923], ['r', 785, 1910], ['g', 773, 1933], ['g', 761, 1910],
    ['r', 749, 1916], ['r', 737, 1916], ['g', 725, 1943], ['g', 713, 1925],
    ['g', 701, 1913], ['r', 689, 1895], ['g', 677, 1899], ['r', 665, 1889],
    ['r', 653, 1955], ['r', 641, 1976], ['g', 629, 1970], ['r', 617, 1965],
    ['r', 605, 1977], ['g', 593, 1977], ['g', 581, 1970], ['r', 569, 1958],
    ['r', 557, 1956], ['g', 545, 1975], ['r', 533, 1968], ['g', 521, 1975],
    ['r', 509, 1973], ['r', 497, 1982], ['r', 485, 1980], ['g', 473, 1975],
    ['g', 461, 1980], ['g', 449, 1975], ['g', 437, 1975], ['g', 425, 1973],
    ['r', 413, 1972], ['r', 401, 1958], ['r', 389, 1968], ['r', 377, 1973],
    ['g', 365, 1976], ['r', 353, 1975], ['g', 341, 1980], ['r', 329, 1978],
    ['g', 317, 1982], ['g', 305, 1983], ['r', 293, 1982], ['r', 281, 1982],
    ['r', 269, 1977], ['g', 257, 1982], ['r', 245, 1979], ['g', 233, 1985],
    ['g', 221, 1985], ['r', 209, 1978], ['r', 197, 1982], ['r', 185, 1979],
    ['g', 173, 1988], ['g', 161, 1987], ['r', 149, 1986], ['g', 137, 1985],
    ['r', 125, 1981], ['r', 113, 1974], ['g', 101, 1983], ['g', 89, 1983],
    ['g', 77, 1977], ['r', 65, 1963], ['g', 53, 1984], ['r', 41, 1988],
    ['r', 28, 1988], ['g', 17, 1983]
];

const BASELINE = 1994;
const volumeLayer = document.getElementById('volumeBars');
volumes.forEach(([color, x, top]) => {
    if (color === 'r') {
        add(volumeLayer, 'rect', {
            x: x - 4.5, y: top, width: 9, height: BASELINE - top - 1,
            fill: '#fff', stroke: '#b8423c', 'stroke-width': 3
        });
    } else {
        add(volumeLayer, 'rect', {
            x: x - 5.5, y: top, width: 11, height: BASELINE - top, fill: GREEN
        });
    }
});

const volumeLines = document.getElementById('volumeLines');
drawLine(volumeLines, ['19,1983', '159,1983', '371,1981', '424,1975', '551,1975', '582,1972', '651,1973', '688,1957', '741,1947', '797,1936'], '#3f9335', 4);
drawLine(volumeLines, ['64,1982', '106,1977', '127,1982', '169,1985', '212,1983', '318,1980', '371,1978', '402,1971', '439,1969', '476,1975', '519,1980', '551,1975', '580,1965', '614,1968', '651,1967', '683,1923', '712,1905', '733,1917', '752,1923', '773,1925', '794,1918'], '#ecbb50', 4);
drawLine(volumeLines, ['64,1983', '159,1981', '265,1983', '371,1978', '408,1973', '519,1974', '556,1973', '582,1968', '651,1970', '688,1943', '731,1930', '762,1915', '783,1915', '797,1919'], '#bb48c4', 4);

// date axis ticks, fading out to the left
const tickLayer = document.getElementById('axisTicks');
for (let x = 797; x > 210; x -= 12.05) {
    const major = Math.abs(x - 797) < 1 || Math.abs(x - 376) < 6;
    add(tickLayer, 'line', {
        x1: x, x2: x, y1: 1997, y2: major ? 2014 : 2008,
        stroke: '#666', 'stroke-width': major ? 3 : 1.5,
        'stroke-opacity': x < 300 ? Math.max(0.1, (x - 210) / 90) : 1
    });
}

// chip distribution, bar lengths in px from the top row down
const chipGreen = [9, 18, 28, 37, 47];
const chipRed = [56, 66, 75, 84, 94, 103, 113, 122, 132, 141, 151, 160, 170, 179, 185, 174, 163, 151, 140, 129, 118, 107, 96, 85, 74, 68, 62, 61, 65, 70, 74, 84, 106, 127, 149, 171, 192, 215, 237, 271, 313, 349, 370, 383, 396, 392, 383, 372, 359, 312, 264, 231, 203, 176, 149, 124, 113, 96, 81, 71, 62, 50, 38, 26, 18, 11, 9, 6, 3, 1];
const chipLow = [1, 3, 4, 4, 3, 2, 2, 2, 2, 2, 1.5, 1, 1, 1, 1, 1, 1, 1];
const ROW = 5.16;
const chipLayer = document.getElementById('chipBars');

function chipBar(y, width, dark, light) {
    add(chipLayer, 'rect', { x: 835, y: y, width: width, height: ROW, fill: light });
    add(chipLayer, 'rect', { x: 835, y: y, width: width, height: 3.6, fill: dark });
}

let chipY = 954;
chipGreen.forEach(width => {
    chipBar(chipY, width, '#6fb558', '#9bd088');
    chipY += ROW;
});
chipRed.forEach(width => {
    chipBar(chipY, width, '#c85552', '#f3a09c');
    chipY += ROW;
});
for (let y = 1412; y < 1483; y += ROW) {
    chipBar(y, 1, '#d8a0a0', '#f3d0d0');
}
chipY = 1511;
chipLow.forEach(width => {
    chipBar(chipY, width, '#c85552', '#f3a09c');
    chipY += ROW;
});
```
